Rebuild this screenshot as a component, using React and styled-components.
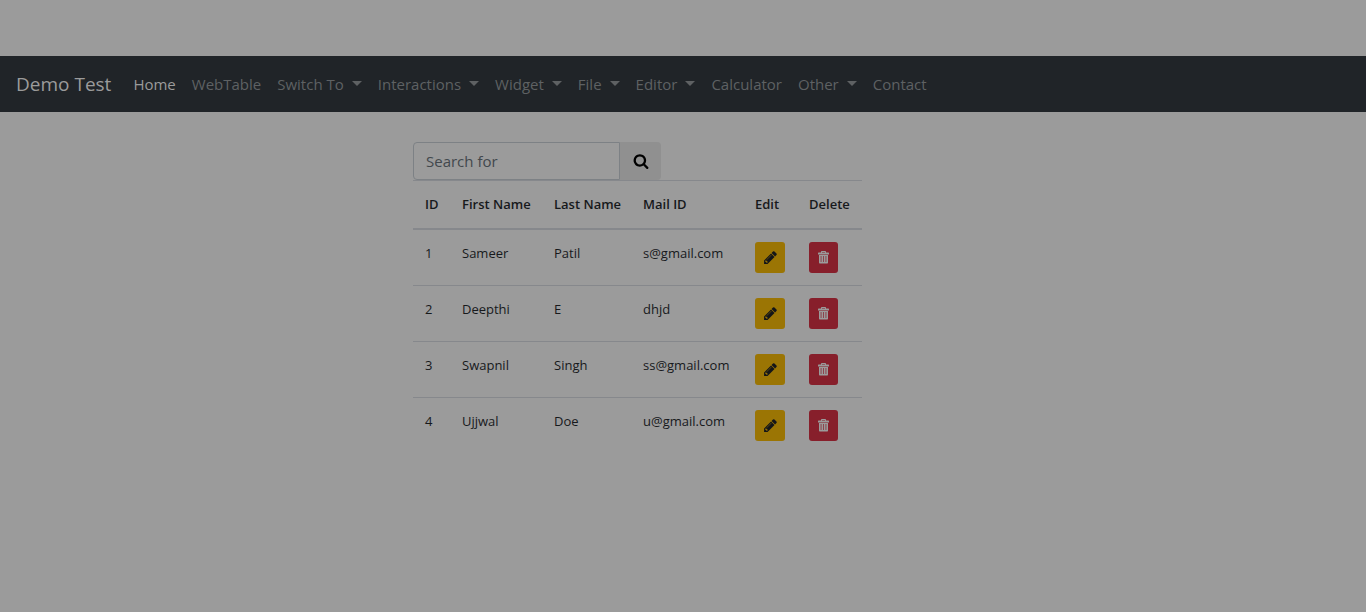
import React from "react";
import styled, { createGlobalStyle } from "styled-components";

const GlobalStyle = createGlobalStyle`
  *, *::before, *::after { box-sizing: border-box; }
  body {
    margin: 0;
    background: #9b9b9b;
    color: #17191c;
    font: 15px/24px "Open Sans", "Noto Sans", sans-serif;
  }
`;

const Page = styled.div`
  padding-top: 56px;
`;

const Navbar = styled.nav`
  display: flex;
  align-items: center;
  min-height: 56px;
  padding: 8px 16px;
  background: #202428;
`;

const Brand = styled.a`
  margin-right: 14px;
  color: #9b9b9b;
  font-size: 19px;
  line-height: 30px;
  text-decoration: none;
  white-space: nowrap;
`;

const NavList = styled.ul`
  display: flex;
  margin: 0;
  padding: 0;
  list-style: none;
`;

const NavLink = styled.a`
  display: flex;
  align-items: center;
  padding: 8px;
  color: ${(p) => (p.$active ? "#9b9b9b" : "#5e6163")};
  text-decoration: none;
  white-space: nowrap;
`;

const Caret = styled.span`
  margin-left: 8px;
  margin-bottom: 2px;
  border-top: 5px solid currentColor;
  border-left: 5px solid transparent;
  border-right: 5px solid transparent;
`;

const Content = styled.main`
  max-width: 540px;
  margin: 30px auto 0;
`;

const SearchForm = styled.form`
  display: flex;
  width: 248px;
  height: 38px;
`;

const SearchInput = styled.input`
  flex: 1;
  min-width: 0;
  padding: 6px 12px;
  border: 1px solid #7d8185;
  border-radius: 4px 0 0 4px;
  background: #9b9b9b;
  color: #2c3034;
  font: inherit;
  &::placeholder { color: #42484d; opacity: 1; }
`;

const SearchButton = styled.button`
  display: flex;
  align-items: center;
  justify-content: center;
  width: 41px;
  padding: 0;
  border: 0;
  border-radius: 0 4px 4px 0;
  background: #909090;
  color: #000;
`;

const Table = styled.table`
  width: 449px;
  table-layout: fixed;
  border-collapse: separate;
  border-spacing: 0;
  font-size: 13px;
`;

const Col = styled.col`
  width: ${(p) => p.$width}px;
`;

const HeadCell = styled.th`
  height: 50px;
  padding: 11px 0 12px 12px;
  border-top: 1px solid #86888c;
  border-bottom: 2px solid #86888c;
  font-weight: 600;
  line-height: 24px;
  text-align: left;
  vertical-align: top;
  white-space: nowrap;
`;

const Cell = styled.td`
  height: 56px;
  padding: 12px 0 12px 12px;
  border-bottom: 1px solid #86888c;
  line-height: 22px;
  vertical-align: top;
  white-space: nowrap;
  tr:last-child > & { border-bottom: 0; }
`;

const ActionButton = styled.button`
  display: flex;
  align-items: center;
  justify-content: center;
  width: ${(p) => (p.$danger ? 29 : 30)}px;
  height: 31px;
  padding: 0;
  border: 0;
  border-radius: 3px;
  background: ${(p) => (p.$danger ? "#871f2b" : "#9b7504")};
  color: ${(p) => (p.$danger ? "#9b9b9b" : "#141618")};
`;

const icons = {
  search: {
    box: 1792,
    path: "M1216 832q0-185-131.5-316.5t-316.5-131.5-316.5 131.5-131.5 316.5 131.5 316.5 316.5 131.5 316.5-131.5 131.5-316.5zm512 832q0 52-38 90t-90 38q-54 0-90-38l-343-342q-179 124-399 124-143 0-273.5-55.5t-225-150-150-225-55.5-273.5 55.5-273.5 150-225 225-150 273.5-55.5 273.5 55.5 225 150 150 225 55.5 273.5q0 220-124 399l343 343q37 37 37 90z",
  },
  pencil: {
    box: 1792,
    path: "M491 1536l91-91-235-235-91 91v107h128v128h107zm523-928q0-22-22-22-10 0-17 7l-542 542q-7 7-7 17 0 22 22 22 10 0 17-7l542-542q7-7 7-17zm-54-192l416 416-832 832h-416v-416zm683 96q0 53-37 90l-166 166-416-416 166-165q36-38 90-38 53 0 91 38l235 234q37 39 37 91z",
  },
  trash: {
    box: 13,
    path: "M4 1.6V.8Q4 0 4.8 0H8.2Q9 0 9 .8V1.6H11.4Q12 1.6 12 2.2V3.4H1V2.2Q1 1.6 1.6 1.6ZM5 1.6H8V1H5ZM2 4H11V11.8Q11 12.5 10.3 12.5H2.7Q2 12.5 2 11.8ZM3.7 5V11H4.4V5ZM6.15 5V11H6.85V5ZM8.6 5V11H9.3V5Z",
  },
};

function Icon({ name, size }) {
  const { box, path } = icons[name];
  return (
    <svg width={size} height={size} viewBox={`0 0 ${box} ${box}`} fill="currentColor" fillRule="evenodd" aria-hidden="true">
      <path d={path} />
    </svg>
  );
}

const links = [
  { label: "Home", active: true },
  { label: "WebTable" },
  { label: "Switch To", menu: true },
  { label: "Interactions", menu: true },
  { label: "Widget", menu: true },
  { label: "File", menu: true },
  { label: "Editor", menu: true },
  { label: "Calculator" },
  { label: "Other", menu: true },
  { label: "Contact" },
];

const columns = [
  { title: "ID", width: 37 },
  { title: "First Name", width: 92 },
  { title: "Last Name", width: 89 },
  { title: "Mail ID", width: 112 },
  { title: "Edit", width: 54 },
  { title: "Delete", width: 65 },
];

const people = [
  { id: 1, first: "Sameer", last: "Patil", mail: "s@gmail.com" },
  { id: 2, first: "Deepthi", last: "E", mail: "dhjd" },
  { id: 3, first: "Swapnil", last: "Singh", mail: "ss@gmail.com" },
  { id: 4, first: "Ujjwal", last: "Doe", mail: "u@gmail.com" },
];

export default function App() {
  return (
    <Page>
      <GlobalStyle />
      <Navbar>
        <Brand href="#">Demo Test</Brand>
        <NavList>
          {links.map((l) => (
            <li key={l.label}>
              <NavLink href="#" $active={l.active}>
                {l.label}
                {l.menu && <Caret />}
              </NavLink>
            </li>
          ))}
        </NavList>
      </Navbar>
      <Content>
        <SearchForm onSubmit={(e) => e.preventDefault()}>
          <SearchInput type="text" placeholder="Search for" aria-label="Search for" />
          <SearchButton type="submit" aria-label="Search">
            <Icon name="search" size={16} />
          </SearchButton>
        </SearchForm>
        <Table>
          <colgroup>
            {columns.map((c) => (
              <Col key={c.title} $width={c.width} />
            ))}
          </colgroup>
          <thead>
            <tr>
              {columns.map((c) => (
                <HeadCell key={c.title} scope="col">{c.title}</HeadCell>
              ))}
            </tr>
          </thead>
          <tbody>
            {people.map((p) => (
              <tr key={p.id}>
                <Cell>{p.id}</Cell>
                <Cell>{p.first}</Cell>
                <Cell>{p.last}</Cell>
                <Cell>{p.mail}</Cell>
                <Cell>
                  <ActionButton type="button" aria-label={`Edit ${p.first}`}>
                    <Icon name="pencil" size={15} />
                  </ActionButton>
                </Cell>
                <Cell>
                  <ActionButton type="button" $danger aria-label={`Delete ${p.first}`}>
                    <Icon name="trash" size={13} />
                  </ActionButton>
                </Cell>
              </tr>
            ))}
          </tbody>
        </Table>
      </Content>
    </Page>
  );
}
